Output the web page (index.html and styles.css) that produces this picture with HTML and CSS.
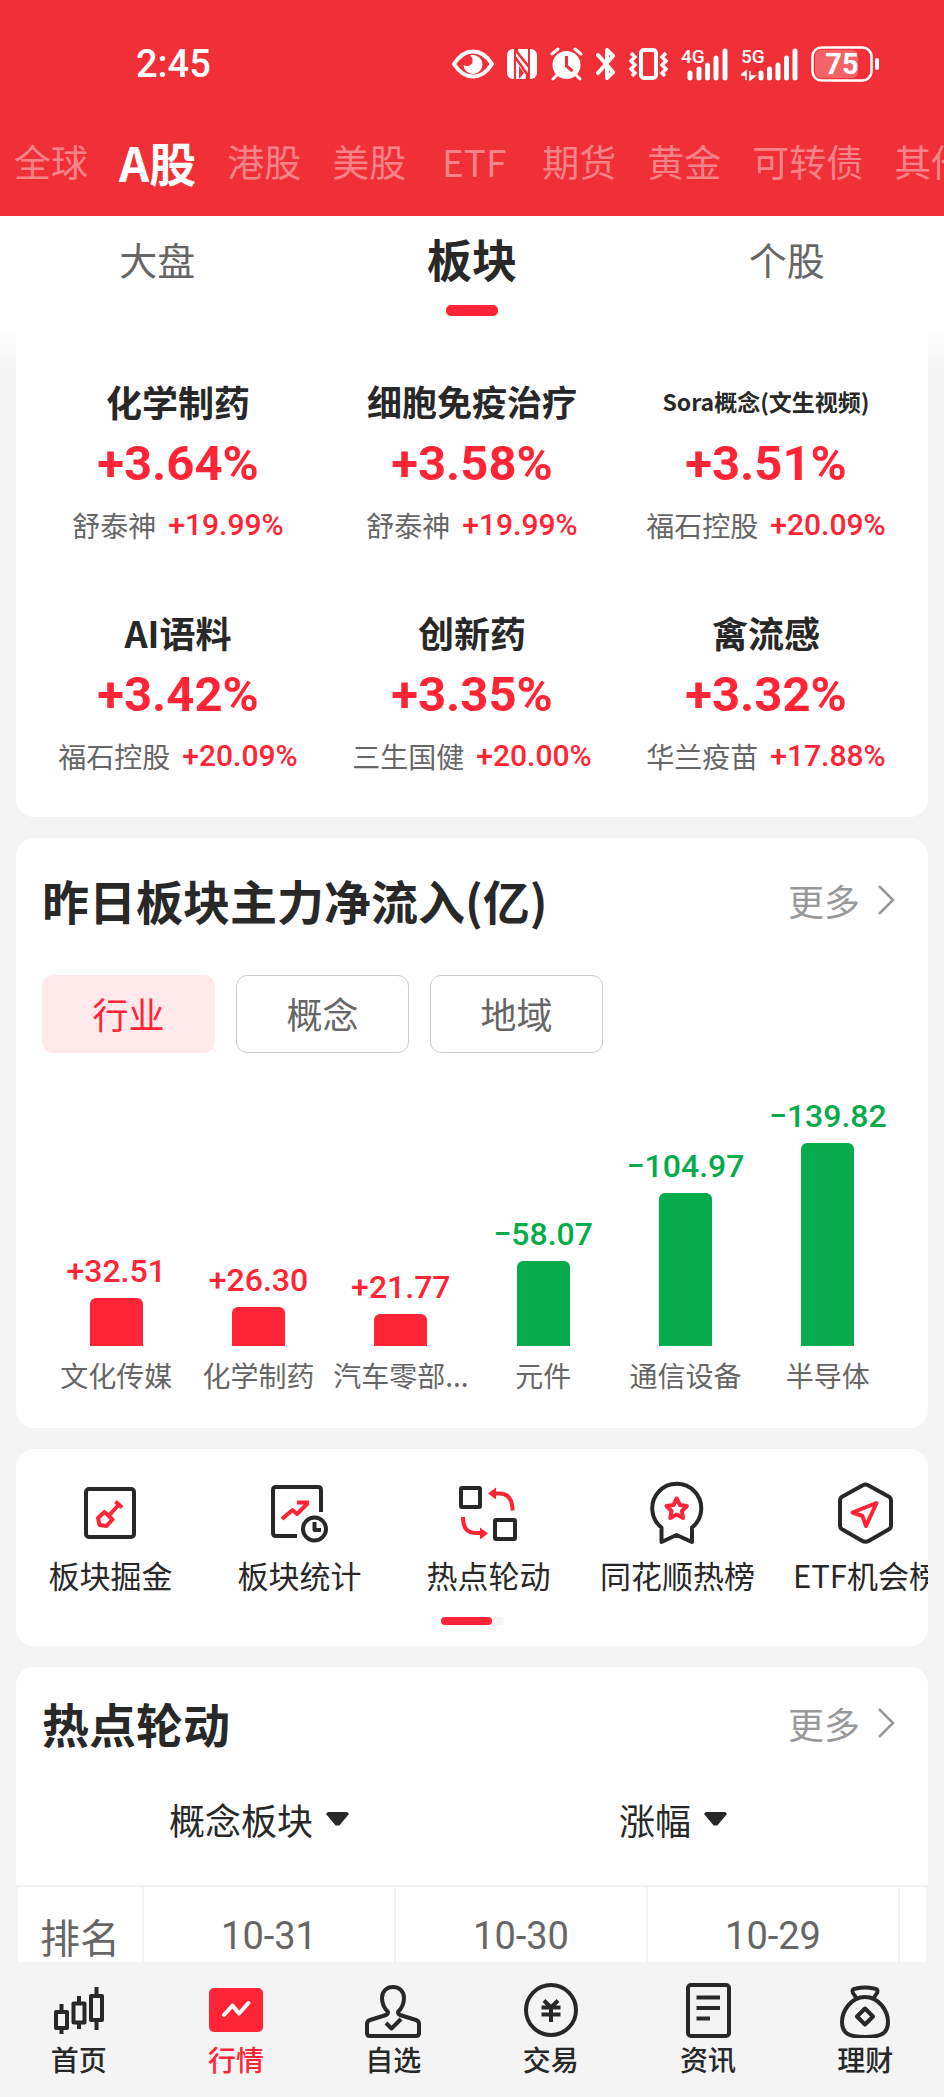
FILE: index.html
```html
<!DOCTYPE html>
<html lang="zh-CN">
<head>
	<meta charset="UTF-8">
	<meta name="viewport" content="width=device-width, initial-scale=1">
	<title>行情</title>
	<link rel="stylesheet" href="styles.css">
</head>
<body>
	<div class="app">
		<header class="header">
			<div class="status">
				<span class="time">2:45</span>
				<div class="status-icons">
					<svg width="42" height="36" viewBox="0 0 42 36">
						<path d="M2 18C7 10 14 5.500 21 5.500s14 4.500 19 12.500c-5 8-12 12.500-19 12.500S7 26 2 18z" fill="none" stroke="#fff" stroke-width="4" stroke-linejoin="round"/>
						<path d="M21 9a9.500 9.500 0 1 1-9.500 10c3 2 8 1 9-3 .6-3-.5-5-2.500-6.500 1-.4 2-.5 3-.5z" fill="#fff"/>
					</svg>
					<svg width="30" height="36" viewBox="0 0 30 36">
						<rect x="0" y="3" width="30" height="30" rx="6" fill="#fff"/>
						<path d="M8 3v30M22 3v30" fill="none" stroke="#f12f36" stroke-width="2"/>
						<path d="M8 11l12 17v5M10 3v3l12 15" fill="none" stroke="#f12f36" stroke-width="2.500"/>
						<path d="M12 20v13l5-6z" fill="#f12f36"/>
					</svg>
					<svg width="33" height="36" viewBox="0 0 33 36">
						<circle cx="16.500" cy="19" r="14" fill="#fff"/>
						<path d="M2 8l6-5M31 8l-6-5M7 29l-4 4M26 29l4 4" stroke="#fff" stroke-width="3" stroke-linecap="round"/>
						<path d="M16.500 10v10l6 5" fill="none" stroke="#f12f36" stroke-width="3"/>
					</svg>
					<svg width="20" height="36" viewBox="0 0 20 36">
						<path d="M2 9l15 17-6 6V4l6 6L2 27" fill="none" stroke="#fff" stroke-width="4" stroke-linejoin="round" stroke-linecap="round"/>
					</svg>
					<svg width="39" height="36" viewBox="0 0 39 36">
						<rect x="12" y="4" width="15" height="28" rx="3" fill="none" stroke="#fff" stroke-width="4"/>
						<path d="M2 7l4 4-4 4 4 4-4 4 4 4-3 3M37 7l-4 4 4 4-4 4 4 4-4 4 3 3" fill="none" stroke="#fff" stroke-width="3.500"/>
					</svg>
					<svg width="47" height="36" viewBox="0 0 47 36">
						<text class="net" x="0" y="17">4G</text>
						<path d="M9 27v5M18 23v9M26.500 19v13M35 12v20M44 5v27" stroke="#fff" stroke-width="5" stroke-linecap="round"/>
					</svg>
					<svg width="57" height="36" viewBox="0 0 57 36">
						<text class="net" x="0" y="17">5G</text>
						<path d="M20 27v5M28.500 23v9M37 19v13M45.500 12v20M54 5v27" stroke="#fff" stroke-width="5" stroke-linecap="round"/>
						<path d="M5 34V25L0 29h5M9 25v9l5-4H9" fill="#fff" stroke="#fff" stroke-width="1.500"/>
					</svg>
					<svg width="69" height="36" viewBox="0 0 69 36">
						<rect x="4" y="4" width="43" height="28" rx="6" fill="#fff" fill-opacity=".25"/>
						<rect x="1.500" y="1.500" width="59" height="33" rx="9" fill="none" stroke="#fff" stroke-width="2.500"/>
						<path d="M66 14v8" stroke="#fff" stroke-width="4" stroke-linecap="round"/>
						<text class="battery" x="31" y="28">75</text>
					</svg>
				</div>
			</div>
			<nav class="markets">
				<a href="#">全球</a>
				<a href="#" class="on">A股</a>
				<a href="#">港股</a>
				<a href="#">美股</a>
				<a href="#">ETF</a>
				<a href="#">期货</a>
				<a href="#">黄金</a>
				<a href="#">可转债</a>
				<a href="#">其他</a>
			</nav>
		</header>

		<div class="subtabs">
			<button type="button">大盘</button>
			<button type="button" class="on">板块</button>
			<button type="button">个股</button>
		</div>

		<main class="content">
			<section class="card sectors">
				<div class="sector">
					<h3>化学制药</h3>
					<div class="rate">+3.64%</div>
					<p>舒泰神<span>+19.99%</span></p>
				</div>
				<div class="sector">
					<h3 class="mid">细胞免疫治疗</h3>
					<div class="rate">+3.58%</div>
					<p>舒泰神<span>+19.99%</span></p>
				</div>
				<div class="sector">
					<h3 class="small">Sora概念(文生视频)</h3>
					<div class="rate">+3.51%</div>
					<p>福石控股<span>+20.09%</span></p>
				</div>
				<div class="sector">
					<h3>AI语料</h3>
					<div class="rate">+3.42%</div>
					<p>福石控股<span>+20.09%</span></p>
				</div>
				<div class="sector">
					<h3>创新药</h3>
					<div class="rate">+3.35%</div>
					<p>三生国健<span>+20.00%</span></p>
				</div>
				<div class="sector">
					<h3>禽流感</h3>
					<div class="rate">+3.32%</div>
					<p>华兰疫苗<span>+17.88%</span></p>
				</div>
			</section>

			<section class="card flow">
				<div class="card-head">
					<h2>昨日板块主力净流入(亿)</h2>
					<a href="#" class="more">更多
						<svg width="20" height="32" viewBox="0 0 20 32"><path d="M3 2l14 14L3 30" fill="none" stroke="#999" stroke-width="2.500"/></svg>
					</a>
				</div>
				<div class="chips">
					<button type="button" class="on">行业</button>
					<button type="button">概念</button>
					<button type="button">地域</button>
				</div>
				<div class="chart">
					<div class="col up"><span class="val">+32.51</span><div class="bar" style="height:48px"></div><span class="name">文化传媒</span></div>
					<div class="col up"><span class="val">+26.30</span><div class="bar" style="height:39px"></div><span class="name">化学制药</span></div>
					<div class="col up"><span class="val">+21.77</span><div class="bar" style="height:32px"></div><span class="name">汽车零部...</span></div>
					<div class="col down"><span class="val">−58.07</span><div class="bar" style="height:85px"></div><span class="name">元件</span></div>
					<div class="col down"><span class="val">−104.97</span><div class="bar" style="height:153px"></div><span class="name">通信设备</span></div>
					<div class="col down"><span class="val">−139.82</span><div class="bar" style="height:203px"></div><span class="name">半导体</span></div>
				</div>
			</section>

			<section class="card tools">
				<div class="tool-list">
					<a href="#">
						<svg class="icon" viewBox="1 0 64 64">
							<rect x="8" y="8" width="48" height="48" rx="3"/>
							<path class="red" d="M26.500 31l-6.500 6 1.500 7 7 1 6-6.500zM31 34.500L41 23.500M37.500 20.500l6.500 6"/>
						</svg>
						<span>板块掘金</span>
					</a>
					<a href="#">
						<svg class="icon" viewBox="1 0 64 64">
							<path d="M54 31V9q0-3-3-3H9q-3 0-3 3v43q0 3 3 3h21"/>
							<circle cx="47.500" cy="48" r="11.500"/>
							<path d="M47.500 41v8H54"/>
							<path class="red" d="M15 38l10.500-9 4.500 4 11-11M30 21.500h12"/>
						</svg>
						<span>板块统计</span>
					</a>
					<a href="#">
						<svg class="icon" viewBox="2 0 64 64">
							<rect x="6" y="7" width="19" height="19" rx="1"/>
							<rect x="40" y="39" width="20" height="19" rx="1"/>
							<path class="red" d="M40 12.500h4q13.500 0 13.500 17M8 36q0 16 12 16h6"/>
							<path class="red-fill" d="M33 12.500l8-6v12zM33 52.500l-8-6v12z"/>
						</svg>
						<span>热点轮动</span>
					</a>
					<a href="#">
						<svg class="icon" viewBox="1 0 64 64">
							<path d="M16.500 46.500a24.500 24.500 0 1 1 30.500 0V61l-15.500-7-15 7z"/>
							<path class="red" d="M31.700 17.500l3.200 6.500 7 1-5 5 1.200 7-6.400-3.400-6.400 3.400 1.200-7-5-5 7-1z"/>
						</svg>
						<span>同花顺热榜</span>
					</a>
					<a href="#">
						<svg class="icon" viewBox="1 0 64 64">
							<path d="M31.500 3.500q2 0 3.500 1.200l20 11q2 1.200 2 3.300v26q0 2-2 3.200l-20 11.500q-3.500 2-7 0l-20-11.500q-2-1.200-2-3.200V19q0-2 2-3.300l20-11q1.500-1.200 3.500-1.200z"/>
							<path class="red" d="M42.500 22l-24 9.500 10 3.500 3.500 10z"/>
						</svg>
						<span>ETF机会榜</span>
					</a>
				</div>
				<div class="track"><i></i></div>
			</section>

			<section class="card rotation">
				<div class="card-head">
					<h2>热点轮动</h2>
					<a href="#" class="more">更多
						<svg width="20" height="32" viewBox="0 0 20 32"><path d="M3 2l14 14L3 30" fill="none" stroke="#999" stroke-width="2.500"/></svg>
					</a>
				</div>
				<div class="filters">
					<label><select aria-label="板块类型"><option>概念板块</option></select></label>
					<label><select aria-label="排序指标"><option>涨幅</option></select></label>
				</div>
				<div class="table-wrap">
					<table>
						<tr>
							<th class="rank">排名</th>
							<th>10-31</th>
							<th>10-30</th>
							<th>10-29</th>
							<th></th>
						</tr>
					</table>
				</div>
			</section>
		</main>

		<nav class="bottom">
			<a href="#">
				<svg class="icon" viewBox="0 0 56 56">
					<path d="M5 30h11v16H5zM22.500 21.500h11v19h-11zM40 14h11v24H40zM10.500 22v8M10.500 46v6M28 14v8M28 41v6M45.500 5v9M45.500 38v10"/>
				</svg>
				<span>首页</span>
			</a>
			<a href="#" class="on">
				<svg class="icon" viewBox="0 0 56 56">
					<rect class="red-fill" x="1" y="6" width="54" height="44" rx="5"/>
					<path class="white" d="M16 33l8.500-9.500 6.500 8 9.500-10.500"/>
				</svg>
				<span>行情</span>
			</a>
			<a href="#">
				<svg class="icon" viewBox="0 0 56 56">
					<path d="M23 30c-4-4-6-8-6-14C17 9 22 5 28 5s11 4 11 11c0 6-2 10-6 14q0 2 2 3l16 5q3 1 3 4v9q0 3-3 3H5q-3 0-3-3v-9q0-3 3-4l16-5q2-1 2-3z"/>
					<path d="M21 41l5.500 5.500L36 37"/>
				</svg>
				<span>自选</span>
			</a>
			<a href="#">
				<svg class="icon" viewBox="0 0 56 56">
					<circle cx="28" cy="28" r="25"/>
					<path d="M21 18.500l7 7 7-7M18.500 25.500h19M18.500 32.500h19M28 25.500V40"/>
				</svg>
				<span>交易</span>
			</a>
			<a href="#">
				<svg class="icon" viewBox="0 0 56 56">
					<rect x="8" y="3" width="41" height="51" rx="3"/>
					<path d="M16.500 15.500H40M16.500 26H40M16.500 36.500H30"/>
				</svg>
				<span>资讯</span>
			</a>
			<a href="#">
				<svg class="icon" viewBox="0 0 56 56">
					<path d="M20 17l-4-6q-2-4 3-4.500 9-2 18 0 5 .5 3 4.500l-4 6"/>
					<path d="M28 15c-14 0-23 14-23 25 0 12 8 15 23 15s23-3 23-15c0-11-9-25-23-25zM28 26.500l8 8-8 8-8-8z"/>
				</svg>
				<span>理财</span>
			</a>
		</nav>
	</div>
</body>
</html>
```

FILE: styles.css
```css
*{
	box-sizing: border-box;
	margin: 0;
	padding: 0;
}
body{
	font-family: "Noto Sans CJK SC", sans-serif;
	color: #282828;
	background-color: #f4f4f4;
}
a{
	color: inherit;
	text-decoration: none;
}
button, select{
	font-family: inherit;
	color: inherit;
	background: none;
	border: none;
}
.app{
	display: flex;
	flex-direction: column;
	height: 100vh;
}

/* 顶部 */
.header{
	background-color: #f12f36;
	color: #fff;
}
.status{
	display: flex;
	align-items: center;
	justify-content: space-between;
	height: 110px;
	padding: 18px 64px 0 136px;
}
.time{
	font: 500 38px/44px Roboto, sans-serif;
}
.status-icons{
	display: flex;
	gap: 13px;
}
.net{
	font: 500 19px Roboto, sans-serif;
	fill: #fff;
}
.battery{
	font: 700 29px Roboto, sans-serif;
	fill: #fff;
	text-anchor: middle;
}
.markets{
	display: flex;
	align-items: center;
	gap: 31px;
	height: 106px;
	padding: 0 0 4px 14px;
	overflow: hidden;
	white-space: nowrap;
	font-size: 37px;
	color: rgba(255,255,255,.42);
}
.markets a{
	flex: none;
	min-width: 74px;
	text-align: center;
}
.markets .on{
	font-size: 47px;
	font-weight: bold;
	color: #fff;
}
.subtabs{
	display: flex;
	background-color: #fff;
}
.subtabs button{
	flex: 1;
	height: 109px;
	padding-top: 13px;
	display: flex;
	flex-direction: column;
	align-items: center;
	font-size: 38px;
	line-height: 60px;
	color: #666;
}
.subtabs .on{
	font-size: 45px;
	font-weight: bold;
	color: #282828;
}
.subtabs .on::after{
	content: "";
	width: 52px;
	height: 11px;
	margin-top: 16px;
	border-radius: 5px;
	background-color: #ff2436;
}

/* 内容 */
.content{
	flex: 1;
	min-height: 0;
	padding: 0 16px;
	overflow: hidden;
	background: linear-gradient(#fff, #f4f4f4 50px);
}
.card{
	margin-bottom: 21px;
	background-color: #fff;
	border-radius: 18px;
	overflow: hidden;
}
.sectors{
	display: grid;
	grid-template-columns: repeat(3, 1fr);
	row-gap: 63px;
	padding: 52px 15px 41px;
	border-radius: 0 0 18px 18px;
	text-align: center;
	white-space: nowrap;
}
.sector h3{
	font-size: 36px;
	line-height: 48px;
}
.sector .mid{
	font-size: 35px;
}
.sector .small{
	font-size: 23px;
}
.rate{
	margin: 9px 0 11px;
	font: 700 49px/60px Roboto, sans-serif;
	color: #ff2436;
}
.sector p{
	display: flex;
	justify-content: center;
	gap: 12px;
	font-size: 28px;
	line-height: 40px;
	color: #666;
}
.sector p span{
	font-family: Roboto, sans-serif;
	font-size: 30px;
	font-weight: 500;
	color: #ff2436;
}
.card-head{
	display: flex;
	align-items: center;
	justify-content: space-between;
	padding: 0 32px 0 26px;
}
.card-head h2{
	font-size: 47px;
	line-height: 64px;
}
.more{
	display: flex;
	align-items: center;
	gap: 16px;
	font-size: 36px;
	line-height: 50px;
	color: #999;
}
.flow{
	padding: 30px 0 31px;
}
.chips{
	display: flex;
	gap: 21px;
	margin: 43px 26px 43px;
}
.chips button{
	width: 173px;
	height: 78px;
	padding-bottom: 2px;
	border: 1px solid #ccc;
	border-radius: 11px;
	font-size: 36px;
	color: #666;
}
.chips .on{
	border-color: #ffe9eb;
	background-color: #ffe9eb;
	color: #ff2436;
}
.chart{
	display: flex;
	align-items: flex-end;
	padding: 0 29px;
}
.col{
	flex: 1;
	min-width: 0;
	display: flex;
	flex-direction: column;
	align-items: center;
	white-space: nowrap;
}
.val{
	margin-bottom: 7px;
	font: 500 32px/40px Roboto, sans-serif;
}
.bar{
	width: 53px;
	border-radius: 6px 6px 0 0;
	background-color: currentColor;
}
.up{
	color: #ff2436;
}
.down{
	color: #07ab4b;
}
.name{
	margin: 9px 0 2px;
	font-size: 28px;
	line-height: 40px;
	color: #666;
}

/* 图标 */
.icon{
	fill: none;
	stroke: #282828;
	stroke-width: 4;
	stroke-linejoin: round;
}
.icon .red{
	stroke: #ff2436;
}
.icon .red-fill{
	fill: #ff2436;
	stroke: none;
}
.icon .white{
	stroke: #fff;
	stroke-linecap: round;
}
.tools{
	padding: 32px 0 21px;
}
.tool-list{
	display: flex;
}
.tool-list a{
	flex: 0 0 189px;
	display: flex;
	flex-direction: column;
	align-items: center;
	gap: 8px;
	font-size: 31px;
	line-height: 44px;
	white-space: nowrap;
}
.tool-list .icon{
	width: 64px;
	height: 64px;
}
.track{
	width: 63px;
	height: 8px;
	margin: 20px auto 0;
	border-radius: 4px;
	background-color: #f4f4f4;
}
.track i{
	display: block;
	width: 51px;
	height: 8px;
	border-radius: 4px;
	background-color: #ff2436;
}
.rotation{
	padding-top: 24px;
}
.filters{
	display: flex;
	padding: 39px 48px 41px 36px;
}
.filters label{
	flex: 1;
	display: flex;
	align-items: center;
	justify-content: center;
	gap: 12px;
}
.filters select{
	appearance: none;
	font-size: 36px;
	height: 50px;
	line-height: 50px;
}
.filters label::after{
	content: "";
	width: 23px;
	height: 14px;
	background-color: #282828;
	clip-path: polygon(8% 0, 92% 0, 100% 14%, 58% 96%, 42% 96%, 0 14%);
}
.table-wrap{
	overflow: hidden;
}
table{
	width: 100%;
	table-layout: fixed;
	border-collapse: collapse;
}
th{
	height: 100px;
	border: 2px solid #f2f2f2;
	font: 400 38px/50px Roboto, sans-serif;
	color: #666;
}
th:last-child{
	width: 28px;
}
.rank{
	width: 126px;
	font: 400 40px/50px "Noto Sans CJK SC", sans-serif;
}

/* 底部导航 */
.bottom{
	display: flex;
	height: 135px;
	padding-top: 20px;
	background-color: #f4f4f4;
}
.bottom a{
	flex: 1;
	display: flex;
	flex-direction: column;
	align-items: center;
	gap: 3px;
	font-size: 28px;
	font-weight: 500;
	line-height: 36px;
}
.bottom .icon{
	width: 56px;
	height: 56px;
}
.bottom .on{
	color: #ff2436;
}
```
